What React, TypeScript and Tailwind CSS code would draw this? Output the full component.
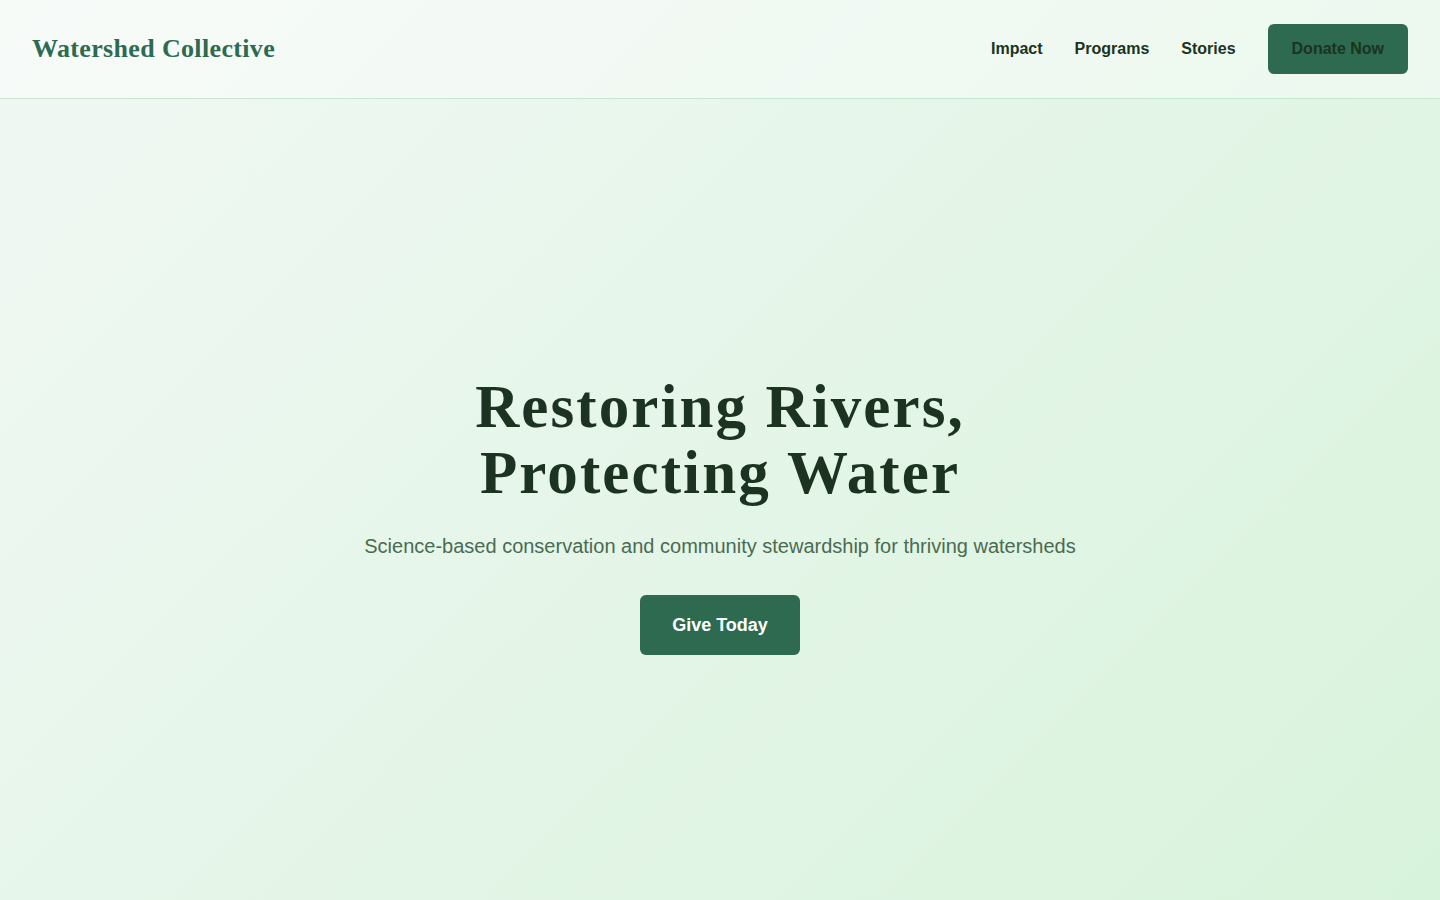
import React from "react";

export default function App() {
  const serif = { fontFamily: '"Liberation Serif", "Times New Roman", serif' };
  return (
    <div
      className="min-h-[900px] w-full bg-[linear-gradient(135deg,#f1f8f4_0%,#d8f3dc_100%)] text-[#1b3320]"
      style={{ fontFamily: '"Liberation Sans", Arial, sans-serif' }}
    >
      <header className="flex h-[99px] items-center justify-between border-b border-[#c5e6cf] bg-white/40 px-8">
        <div className="text-[26px] font-bold leading-none tracking-[0.35px] text-[#2d6a4f]" style={serif}>
          Watershed Collective
        </div>
        <nav className="flex items-center gap-8">
          <a className="text-base font-bold text-[#1b3320]">Impact</a>
          <a className="text-base font-bold text-[#1b3320]">Programs</a>
          <a className="text-base font-bold text-[#1b3320]">Stories</a>
          <button className="h-[50px] rounded-md bg-[#2d6a4f] px-6 text-base font-bold text-[#1b3320]">
            Donate Now
          </button>
        </nav>
      </header>
      <main className="flex flex-col items-center px-8 pt-[275px] text-center">
        <h1 className="text-[61px] font-bold leading-[66px] tracking-[2.1px] text-[#1b3320]" style={serif}>
          Restoring Rivers,
          <br />
          Protecting Water
        </h1>
        <p className="mt-6 text-xl leading-8 text-[#4a6b52]">
          Science-based conservation and community stewardship for thriving watersheds
        </p>
        <button className="mt-[33px] h-[60px] w-[160px] rounded-md bg-[#2d6a4f] text-lg font-bold text-white">
          Give Today
        </button>
      </main>
    </div>
  );
}
